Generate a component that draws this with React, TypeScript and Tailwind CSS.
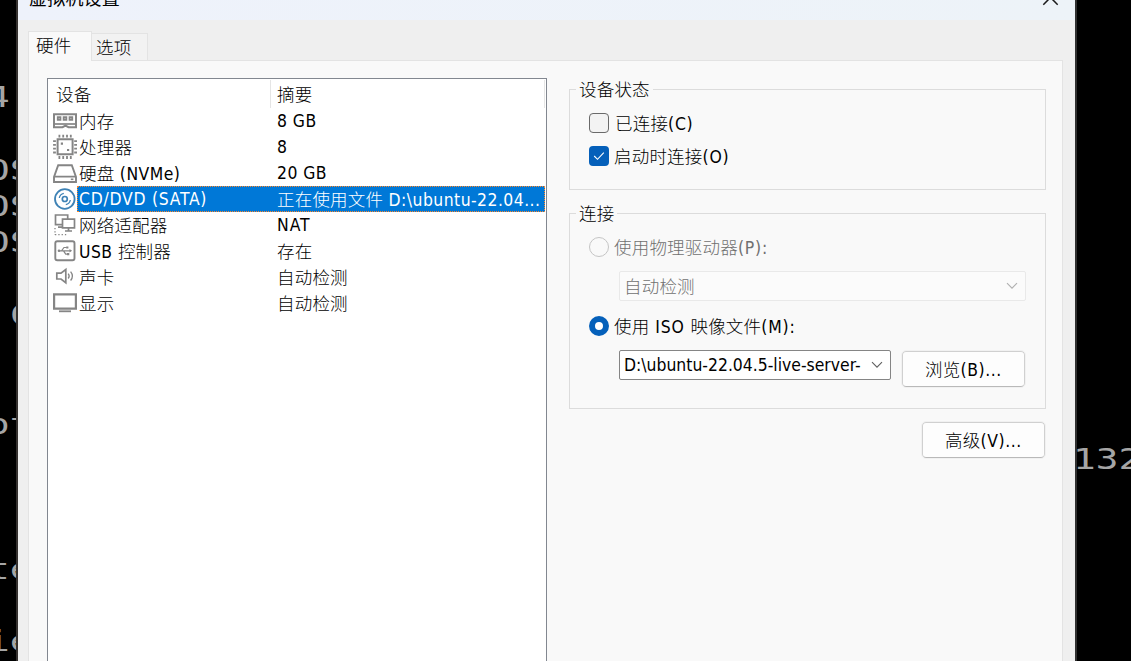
import type { ReactNode } from 'react';

const uiFont = "font-['DejaVu_Sans_Condensed','DejaVu_Sans','Noto_Sans_CJK_SC',sans-serif]";

const terminalLines = ['4.', '', 'OS', 'OS', 'OS', '', ' C', '', '', 'ot', '', '', '', 'te', '', 'ie'];

function Label({ text, className = '' }: { text: string; className?: string }) {
  const parts = text.split(/([\u4e00-\u9fff]+)/).filter(Boolean);
  return (
    <span className={`whitespace-pre ${className}`}>
      {parts.map((part, i) =>
        /[\u4e00-\u9fff]/.test(part) ? (
          <span key={i} className="font-['Noto_Sans_CJK_SC',sans-serif] text-[17.5px] font-light tracking-[0.2px]">
            {part}
          </span>
        ) : (
          <span key={i}>{part}</span>
        ),
      )}
    </span>
  );
}

function Icon({ children, color = '#858585' }: { children: ReactNode; color?: string }) {
  return (
    <svg width="24" height="26" viewBox="0 0 24 26" fill="none" stroke={color} strokeWidth="1.7" className="shrink-0">
      {children}
    </svg>
  );
}

const memoryIcon = (
  <Icon>
    <path d="M1 6.2h22v13h-7.5l-3-1.6-3 1.6H1z" strokeWidth="2" />
    <path d="M1 16h22" strokeWidth="1.7" />
    <path d="M4.8 9.3h2.6v2.6H4.8zM10.7 9.3h2.6v2.6h-2.6zM16.6 9.3h2.6v2.6h-2.6z" strokeWidth="1.9" />
  </Icon>
);
const cpuIcon = (
  <Icon>
    <path d="M4.6 5.2h15v15h-15z" strokeWidth="2" />
    <path d="M5.5 2.2h13.2M5.5 23.5h13.2" strokeWidth="2.8" strokeDasharray="1.8 2" />
    <path d="M1.5 6.2v13.2M22.6 6.2v13.2" strokeWidth="2.8" strokeDasharray="1.8 2" />
    <path d="M7.8 9.6H10M14 16h2.2" strokeWidth="2.2" />
  </Icon>
);
const diskIcon = (
  <Icon>
    <path d="M5.2 5.2h13.6L23 17v5H1v-5zM1 16.6h22" strokeWidth="1.9" />
    <path d="M17.8 19.3h2.6" strokeWidth="1.6" />
  </Icon>
);
const discIcon = (
  <Icon color="#3e82b5">
    <circle cx="11.8" cy="13" r="9.8" strokeWidth="1.8" />
    <circle cx="11.8" cy="13" r="2.5" strokeWidth="1.7" />
    <path d="M6.3 12a5.7 5.7 0 0 1 4.5-4.6M17.3 14a5.7 5.7 0 0 1-4.5 4.6" strokeWidth="1.3" />
  </Icon>
);
const networkIcon = (
  <Icon>
    <path d="M9 12.6H2.5V3h12.2v4M5 15.2h4.5" />
    <path d="M9.5 7.2h12v8.6h-12zM15.5 16v3M12 19h7" />
    <path d="M2 16v7M2 22.6h13" strokeWidth="1.3" strokeDasharray="1.3 2" />
  </Icon>
);
const usbIcon = (
  <Icon>
    <rect x="2.3" y="3.2" width="19.2" height="19" rx="2" strokeWidth="1.9" />
    <path d="M5.5 12.8h12M8.5 12.8l2.5-3.3h2.8M10.5 12.8l2.2 3.4h2" strokeWidth="1.2" />
    <circle cx="6" cy="12.8" r="1.3" fill="#858585" stroke="none" />
    <path d="M16.5 11l2.6 1.8-2.6 1.8zM13.2 8.4h2.2v2.2h-2.2zM14 15h2.3v2.3H14z" fill="#858585" stroke="none" />
  </Icon>
);
const soundIcon = (
  <Icon>
    <path d="M3.8 9.2H8l4.8-3.7v13.2L8 15H3.8z" strokeWidth="1.7" />
    <path d="M15.2 9.6c1.2 1.5 1.2 3.4 0 4.9M17.6 7.6c2.2 2.7 2.2 6.2 0 8.9" strokeWidth="1.3" />
  </Icon>
);
const displayIcon = (
  <Icon>
    <path d="M1.1 4.3h21.8v14.4H1.1z" strokeWidth="2.2" />
    <path d="M6 21.3h12" strokeWidth="1.8" />
  </Icon>
);

const devices = [
  { icon: memoryIcon, name: '内存', summary: '8 GB' },
  { icon: cpuIcon, name: '处理器', summary: '8' },
  { icon: diskIcon, name: '硬盘 (NVMe)', summary: '20 GB' },
  { icon: discIcon, name: 'CD/DVD (SATA)', summary: '正在使用文件 D:\\ubuntu-22.04...', selected: true },
  { icon: networkIcon, name: '网络适配器', summary: 'NAT' },
  { icon: usbIcon, name: 'USB 控制器', summary: '存在' },
  { icon: soundIcon, name: '声卡', summary: '自动检测' },
  { icon: displayIcon, name: '显示', summary: '自动检测' },
];

function DeviceList() {
  return (
    <div className="h-[600px] w-[500px] shrink-0 border border-[#828790] bg-white">
      <div className="flex h-[29px] items-center">
        <Label text="设备" className="w-[222px] pt-[2px] pl-[8px]" />
        <div className="mt-px flex h-7 w-[275px] items-center border-x border-[#e5e5e5] pt-px pl-[6px]">
          <Label text="摘要" />
        </div>
      </div>
      {devices.map((d) => (
        <div key={d.name} className="flex h-[26px] items-center pl-[5px] leading-[26px]">
          {d.icon}
          <div
            className={`flex h-[26px] w-[468px] items-center ${
              d.selected
                ? 'border border-dotted border-[#ff8728] bg-[#0078d7] pl-px text-white'
                : 'pl-[2px]'
            }`}
          >
            <Label text={d.name} className={`w-[198px] shrink-0 ${d.selected ? 'tracking-[0.75px]' : 'tracking-[0.45px]'}`} />
            <Label text={d.summary} className={d.summary === 'NAT' ? 'tracking-[1px]' : 'tracking-[0.45px]'} />
          </div>
        </div>
      ))}
    </div>
  );
}

function Group({ title, className, children }: { title: string; className: string; children: ReactNode }) {
  return (
    <section className={`w-[477px] border border-[#dcdcdc] ${className}`}>
      <div className="-mt-[14px] ml-[6px] h-[25px] w-fit bg-[#f9f9f9] px-[3px] leading-[25px]">
        <Label text={title} />
      </div>
      {children}
    </section>
  );
}

function Chevron({ color }: { color: string }) {
  return (
    <svg width="12" height="8" viewBox="0 0 12 8" fill="none" stroke={color} strokeWidth="1.1" className="shrink-0">
      <path d="M1 1.2l5 5 5-5" />
    </svg>
  );
}

function PushButton({ text }: { text: string }) {
  return (
    <button className="flex h-9 w-[123px] shrink-0 items-center justify-center rounded-[4px] border border-[#d0d0d0] border-b-[#b9b9b9] bg-[#fdfdfd] outline outline-[#f1f1f1]">
      <Label text={text} className="tracking-[0.6px]" />
    </button>
  );
}

export default function App() {
  return (
    <div className={`flex h-[661px] w-[1131px] overflow-hidden bg-black text-[17.4px] leading-6 text-black ${uiFont}`}>
      <div className="h-full w-[18px] shrink-0 overflow-hidden border-r-2 border-[#35312f] pt-[79px]">
        {terminalLines.map((line, i) => (
          <div
            key={i}
            className="-ml-[13px] h-[36.3px] w-[44px] origin-left scale-x-[1.3] font-['DejaVu_Sans_Mono',monospace] text-[29px] leading-[36.3px] whitespace-pre text-[#a5a5a5]"
          >
            {line}
          </div>
        ))}
      </div>

      <main className="flex h-full w-[1057px] shrink-0 flex-col bg-[#efefef]">
        <header className="flex h-5 shrink-0 items-start justify-between overflow-hidden bg-gradient-to-r from-[#eef2fb] to-[#edf3f8] pr-[16px] pl-[11px]">
          <h1 className="-mt-[15px] font-['Noto_Sans_CJK_SC',sans-serif] text-[18px] leading-6 tracking-[0.2px]">虚拟机设置</h1>
          <svg width="17" height="17" viewBox="0 0 17 17" fill="none" stroke="#1a1a1a" strokeWidth="1.5" className="-mt-[11px]">
            <path d="M1.3 1.3l14.4 14.4M15.7 1.3L1.3 15.7" />
          </svg>
        </header>

        <nav className="flex h-10 shrink-0 items-end pl-[10px]">
          <div className="z-10 -mb-px h-[30px] w-[64px] border border-b-0 border-[#e3e3e3] bg-[#f9f9f9] pl-[7px] leading-[26px]">
            <Label text="硬件" />
          </div>
          <div className="-ml-px h-[27px] w-[57px] border border-b-0 border-[#e3e3e3] bg-[#f2f2f2] pl-[4px] leading-[25px]">
            <Label text="选项" />
          </div>
        </nav>

        <div className="ml-[10px] flex h-[620px] w-[1035px] items-start border border-[#e3e3e3] bg-[#f9f9f9] pt-[17px] pl-[18px]">
          <DeviceList />

          <div className="ml-[22px] flex flex-col pt-[11px]">
            <Group title="设备状态" className="h-[101px]">
              <div className="mt-[11px] flex h-[22px] items-center pl-[19px]">
                <span className="h-5 w-5 rounded-[4px] border border-[#6a6a6a] bg-[#f3f3f3]" />
                <Label text="已连接(C)" className="ml-[6px] tracking-[0.7px]" />
              </div>
              <div className="mt-[11px] flex h-[22px] items-center pl-[19px]">
                <span className="flex h-5 w-5 items-center justify-center rounded-[4px] bg-[#0560ba]">
                  <svg width="12" height="10" viewBox="0 0 12 10" fill="none" stroke="white" strokeWidth="1.1">
                    <path d="M1.2 5l3.3 3.3 6.3-6.7" />
                  </svg>
                </span>
                <Label text="启动时连接(O)" className="ml-[5px] tracking-[0.8px]" />
              </div>
            </Group>

            <Group title="连接" className="mt-[23px] h-[196px]">
              <div className="mt-[11px] flex h-[22px] items-center pl-[19px] text-[#707070]">
                <span className="h-5 w-5 rounded-full border border-[#c5c5c5]" />
                <Label text="使用物理驱动器(P):" className="ml-[5px] tracking-[0.8px]" />
              </div>
              <div className="mt-[13px] ml-[49px] flex h-[30px] w-[407px] items-center justify-between rounded-[2px] border border-[#e9e9e9] bg-[#fbfbfb] pr-[7px] pl-[4px] text-[#707070]">
                <Label text="自动检测" />
                <Chevron color="#b0b0b0" />
              </div>
              <div className="mt-[14px] flex h-[22px] items-center pl-[19px]">
                <span className="h-5 w-5 rounded-full border-[6px] border-[#0560ba] bg-white" />
                <Label text="使用 ISO 映像文件(M):" className="ml-[5px] tracking-[0.85px]" />
              </div>
              <div className="mt-[13px] ml-[49px] flex items-start">
                <div className="flex h-[30px] w-[272px] items-center justify-between rounded-[2px] border border-[#858585] bg-white pr-[7px] pl-1">
                  <div className="w-[238px] overflow-hidden whitespace-nowrap">D:\ubuntu-22.04.5-live-server-</div>
                  <Chevron color="#606060" />
                </div>
                <div className="mt-px ml-[11px]">
                  <PushButton text="浏览(B)..." />
                </div>
              </div>
            </Group>

            <div className="mt-[13px] flex justify-end pr-px">
              <PushButton text="高级(V)..." />
            </div>
          </div>
        </div>
      </main>

      <div className="h-full w-[56px] shrink-0 overflow-hidden border-l-2 border-[#303030] pt-[441px]">
        <div className="-ml-[4px] w-[60px] origin-left scale-x-[1.3] font-['DejaVu_Sans_Mono',monospace] text-[29px] leading-[36px] whitespace-pre text-[#a5a5a5]">
          132
        </div>
      </div>
    </div>
  );
}
